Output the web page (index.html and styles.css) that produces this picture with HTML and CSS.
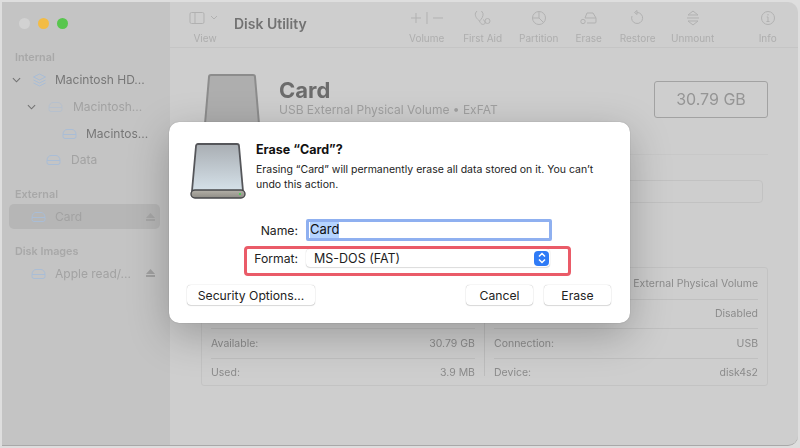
FILE: index.html
```html
<!DOCTYPE html>
<html lang="en">
<head>
<meta charset="utf-8">
<title>Disk Utility</title>
<link rel="stylesheet" href="styles.css">
</head>
<body>
<div class="window">
  <aside class="sidebar">
    <div class="lights"><i class="light l-grey"></i><i class="light l-yellow"></i><i class="light l-green"></i></div>
    <div class="sec sec-first">Internal</div>
    <div class="row r1"><svg class="chev" viewBox="0 0 10 6"><path d="M1 1l4 4 4-4"/></svg>
      <svg class="vol" viewBox="0 0 14 14"><path d="M7 1l6 3-6 3-6-3zM1 7l6 3 6-3M1 10l6 3 6-3"/></svg><span class="dim">Macintosh HD...</span></div>
    <div class="row r2"><svg class="chev" viewBox="0 0 10 6"><path d="M1 1l4 4 4-4"/></svg>
      <svg class="vol faint" viewBox="0 0 15 11"><path d="M1 6c0-3 2-5 4-5h5c2 0 4 2 4 5v2a2 2 0 0 1-2 2H3a2 2 0 0 1-2-2zM1 6h13"/></svg><span class="lighter">Macintosh...</span></div>
    <div class="row r3"><svg class="vol" viewBox="0 0 15 11"><path d="M1 6c0-3 2-5 4-5h5c2 0 4 2 4 5v2a2 2 0 0 1-2 2H3a2 2 0 0 1-2-2zM1 6h13"/></svg><span class="dim">Macintos...</span></div>
    <div class="row r4"><svg class="vol" viewBox="0 0 15 11"><path d="M1 6c0-3 2-5 4-5h5c2 0 4 2 4 5v2a2 2 0 0 1-2 2H3a2 2 0 0 1-2-2zM1 6h13"/></svg><span class="lighter">Data</span></div>
    <div class="sec sec-ext">External</div>
    <div class="row r5 selected"><svg class="vol" viewBox="0 0 15 11"><path d="M1 6c0-3 2-5 4-5h5c2 0 4 2 4 5v2a2 2 0 0 1-2 2H3a2 2 0 0 1-2-2zM1 6h13"/></svg><span class="lighter">Card</span><svg class="eject" viewBox="0 0 9 8"><path d="M4.500 0L9 5H0zM0 6h9v2H0z"/></svg></div>
    <div class="sec sec-img">Disk Images</div>
    <div class="row r6"><svg class="vol" viewBox="0 0 15 11"><path d="M1 6c0-3 2-5 4-5h5c2 0 4 2 4 5v2a2 2 0 0 1-2 2H3a2 2 0 0 1-2-2zM1 6h13"/></svg><span class="lighter">Apple read/...</span><svg class="eject" viewBox="0 0 9 8"><path d="M4.500 0L9 5H0zM0 6h9v2H0z"/></svg></div>
  </aside>
  <main class="main">
    <header class="toolbar">
      <div class="tool view">
        <div class="glyph"><svg width="32" height="14" viewBox="0 0 32 14"><rect x="1" y="1.500" width="14" height="11" rx="1.500"/><path d="M6 1.500v11M22 5l3 3 3-3"/></svg></div>
        <span>View</span>
      </div>
      <div class="app-title">Disk Utility</div>
      <div class="tools">
        <div class="tool t-volume"><div class="glyph"><svg width="36" height="14" viewBox="0 0 36 14"><path d="M7 2v10M2 7h10M18 1v12M24 7h10"/></svg></div><span>Volume</span></div>
        <div class="tool t-aid"><div class="glyph"><svg width="18" height="16" viewBox="0 0 18 16"><path d="M3 1L1.500 3c-1 3 1.500 6 4 8 2-2 4-4.500 3.500-7.500L7.500 1M5.500 11c1 3 3 4 5 3 .8-.8.5-2-.2-3l-.8-1.500"/><circle cx="13.500" cy="11" r="2.500"/></svg></div><span>First Aid</span></div>
        <div class="tool t-part"><div class="glyph"><svg width="16" height="16" viewBox="0 0 16 16"><circle cx="8" cy="8" r="6.500"/><path d="M8 1.500V8l4.500 4.500M8 8H1.500"/></svg></div><span>Partition</span></div>
        <div class="tool t-erase"><div class="glyph"><svg width="18" height="14" viewBox="0 0 18 14"><path d="M5 7l2-5h6l3 5v4a1 1 0 0 1-1 1H7M5 7h11"/><circle cx="3" cy="10.500" r="2.200"/></svg></div><span>Erase</span></div>
        <div class="tool t-restore"><div class="glyph"><svg width="16" height="16" viewBox="0 0 16 16"><path d="M7 2.500a5.500 5.500 0 1 1-5 3.500M7 .5v4L4.500 2.500z"/></svg></div><span>Restore</span></div>
        <div class="tool t-unmount"><div class="glyph"><svg width="14" height="16" viewBox="0 0 14 16"><path d="M2 5l5-4 5 4zM2 11l5 4 5-4zM1 8h12"/></svg></div><span>Unmount</span></div>
        <div class="tool t-info"><div class="glyph"><svg width="16" height="16" viewBox="0 0 16 16"><circle cx="8" cy="8" r="6.500"/><path d="M8 7v4.500M6.500 11.500h3M6.800 7H8"/><circle class="dot" cx="8" cy="4.800" r=".7"/></svg></div><span>Info</span></div>
      </div>
    </header>
    <section class="content">
      <div class="head">
        <svg class="drive-bg" width="56" height="50" viewBox="0 0 56 50"><path d="M5 3a2 2 0 0 1 2-2h42a2 2 0 0 1 2 2l4 47H1z"/></svg>
        <div class="head-text">
          <h1>Card</h1>
          <p>USB External Physical Volume • ExFAT</p>
        </div>
        <div class="capacity">30.79 GB</div>
      </div>
      <div class="usage-line"></div>
      <div class="usage-bar"></div>
      <div class="info-table">
        <div class="col">
          <div class="cell"></div>
          <div class="cell"></div>
          <div class="cell"><span>Available:</span><span>30.79 GB</span></div>
          <div class="cell"><span>Used:</span><span>3.9 MB</span></div>
        </div>
        <div class="col col-right">
          <div class="cell"><span></span><span>External Physical Volume</span></div>
          <div class="cell"><span></span><span>Disabled</span></div>
          <div class="cell"><span>Connection:</span><span>USB</span></div>
          <div class="cell"><span>Device:</span><span>disk4s2</span></div>
        </div>
      </div>
    </section>
  </main>
  <div class="dialog">
    <div class="dlg-top">
      <svg class="dlg-drive" width="56" height="56" viewBox="0 0 56 56">
        <defs>
          <linearGradient id="face" x1="0" y1="0" x2="0" y2="1"><stop offset="0" stop-color="#a9aeb3"/><stop offset="1" stop-color="#d5e1e9"/></linearGradient>
          <linearGradient id="base" x1="0" y1="0" x2="0" y2="1"><stop offset="0" stop-color="#b4b1a8"/><stop offset="1" stop-color="#8f8d86"/></linearGradient>
        </defs>
        <path d="M6 3a2 2 0 0 1 2-2h39a2 2 0 0 1 2 2l4 45H2z" fill="url(#face)" stroke="#55565a" stroke-width="1.800"/>
        <rect x="1" y="47" width="54" height="8" rx="4" fill="url(#base)" stroke="#47484b" stroke-width="1.400"/>
        <circle cx="50" cy="51" r="1.100" fill="#3fd24a"/>
      </svg>
      <div class="dlg-copy">
        <h2>Erase “Card”?</h2>
        <p>Erasing “Card” will permanently erase all data stored on it. You can’t undo this action.</p>
      </div>
    </div>
    <div class="form-row name-row">
      <label class="lab">Name:</label>
      <div class="name-field"><span class="sel-text">Card</span></div>
    </div>
    <div class="form-row format-row">
      <label class="lab">Format:</label>
      <div class="select">
        <span>MS-DOS (FAT)</span>
        <span class="stepper"><svg width="10" height="12" viewBox="0 0 10 12"><path d="M2 4.500l3-3 3 3M2 7.500l3 3 3-3"/></svg></span>
      </div>
      <div class="callout"></div>
    </div>
    <div class="actions">
      <button class="btn sec-btn">Security Options...</button>
      <button class="btn cancel">Cancel</button>
      <button class="btn erase">Erase</button>
    </div>
  </div>
</div>
</body>
</html>
```
FILE: styles.css
```css
* { box-sizing: border-box; }
html, body { margin: 0; height: 100%; }
body {
  width: 800px; height: 448px; overflow: hidden;
  background: #dedede;
  font-family: Inter, "Liberation Sans", sans-serif;
  padding: 2px 2px 2px 2px;
}
.window {
  position: relative; display: flex; width: 796px; height: 444px;
  border-radius: 0 10px 10px 0; overflow: hidden;
  background: #cecece; border-bottom: 1px solid #a9a9a9;
}
.sidebar { width: 168px; flex: none; background: #c4c4c4; padding-top: 16px; font-size: 12px; color: #7d7d7d; filter: blur(.3px); }
.lights { display: flex; gap: 8px; padding-left: 17px; height: 12px; }
.light { width: 11px; height: 11px; border-radius: 50%; }
.l-grey { background: #d2d2d2; } .l-yellow { background: #f3bc45; } .l-green { background: #58c64e; }
.sec { font-size: 10.800px; font-weight: 600; color: #a8a8a8; padding-left: 13px; line-height: 14px; }
.sec-first { margin-top: 21px; }
.sec-ext { margin-top: 15px; }
.sec-img { margin-top: 16px; }
.row { display: flex; align-items: center; height: 27px; position: relative; }
.row svg { fill: none; flex: none; }
.row .chev { width: 9px; height: 6px; stroke: #727272; stroke-width: 1.200; }
.row .vol { width: 15px; height: 14px; stroke: #a9bdd6; stroke-width: 1; margin-right: 10px; }
.row .vol.faint { stroke: #b6c0cd; }
.dim { color: #777; } .lighter { color: #a2a2a2; }
.r1 { padding-left: 10px; margin-top: 1px; } .r1 .chev { margin-right: 11px; } .r1 .vol { margin-right: 8px; }
.r2 { padding-left: 25px; } .r2 .chev { margin-right: 12px; }
.r3 { padding-left: 60px; } .r3 .vol { margin-right: 9px; }
.r4 { padding-left: 44px; margin-top: -1px; }
.r5 .vol, .r6 .vol { margin-right: 9px; }
.r6 { padding-left: 29px; margin-top: 1px; }
.selected { margin: 2px 10px 0 7px; padding-left: 22px; height: 25px; background: #b6b6b6; border-radius: 5px; }
.row .eject { position: absolute; width: 9px; height: 8px; top: 9px; fill: #a6a6a6; }
.r5 .eject { right: 5px; }
.r6 .eject { right: 15px; fill: #a0a0a0; }
.main { flex: 1; min-width: 0; filter: blur(.3px); }
.toolbar { height: 46px; display: flex; align-items: flex-start; border-bottom: 1px solid #c5c5c5; padding-top: 6px; position: relative; }
.tool { display: flex; flex-direction: column; align-items: center; font-size: 10px; color: #aeaeae; }
.tool span { line-height: 14px; }
.glyph { height: 20px; display: flex; align-items: center; margin-bottom: 3px; }
.glyph svg { fill: none; stroke: #b1b1b1; stroke-width: 1; }
.glyph .dot { fill: #b1b1b1; stroke: none; }
.view { margin-left: 19px; width: 32px; }
.app-title { margin-left: 13px; margin-top: 7px; font-size: 14px; font-weight: 600; color: #727272; }
.tools { display: flex; flex: 1; margin-left: 101px; }
.t-volume { width: 38px; }
.t-aid { width: 40px; margin-left: 17px; }
.t-part { width: 42px; margin-left: 15px; }
.t-erase { width: 30px; margin-left: 14px; }
.t-restore { width: 38px; margin-left: 15px; }
.t-unmount { width: 46px; margin-left: 13px; }
.t-info { width: 24px; margin-left: 40px; }
.content { padding: 0 30px 0 31px; position: relative; }
.head { display: flex; align-items: flex-start; height: 106px; position: relative; }
.drive-bg { flex: none; margin-left: 3px; margin-top: 26px; fill: #aeaeae; stroke: #8c8c8c; stroke-width: 2; }
.head-text { margin-left: 19px; margin-top: 29px; }
h1 { margin: 0; font-size: 22px; line-height: 26px; font-weight: 700; color: #6c6c6c; }
p { margin: 0; }
.head-text p { font-size: 12px; line-height: 14px; color: #a0a0a0; }
.capacity { margin-left: auto; margin-top: 33px; width: 114px; height: 37px; border: 1px solid #a2a2a2; border-radius: 3px; font-size: 16px; line-height: 35px; text-align: center; color: #959595; }
.usage-line { height: 1px; background: #c8c8c8; }
.usage-bar { height: 23px; margin-top: 25px; margin-right: 5px; border: 1px solid #c2c2c2; border-radius: 4px; }
.info-table { display: flex; margin-top: 64px; height: 119px; border: 1px solid #c3c3c3; border-radius: 3px; padding-top: 1px; }
.col { flex: 1; padding: 0 9px; }
.col-right { border-left: 1px solid #bdbdbd; align-self: flex-start; height: 107px; }
.cell { display: flex; justify-content: space-between; align-items: center; height: 29.500px; font-size: 10.500px; color: #8b8b8b; border-top: 1px solid #c0c0c0; }
.cell:first-child { border-top: 0; }
.dialog { position: absolute; left: 167px; top: 120px; width: 461px; height: 201px; background: #fff; border-radius: 10px; box-shadow: 0 0 1px rgba(0,0,0,.35), 0 12px 40px rgba(0,0,0,.25); padding: 21px 19px 0 18px; color: #1d1d1d; }
.dlg-top { display: flex; align-items: flex-start; padding-left: 3px; height: 76px; }
.dlg-drive { flex: none; }
.dlg-copy { margin-left: 10px; }
h2 { margin: 0 0 5px; font-size: 12.500px; line-height: 14px; font-weight: 700; color: #111; }
.dlg-copy p { font-size: 10.500px; line-height: 15px; color: #222; width: 350px; }
.form-row { display: flex; align-items: center; position: relative; font-size: 12.200px; }
.lab { width: 111px; text-align: right; margin-right: 8px; color: #222; flex: none; }
.name-row { height: 22px; }
.name-field { width: 246px; height: 22px; border: 3px solid #8fb0f0; border-radius: 2px; padding-left: 1px; font-size: 13px; line-height: 15px; }
.sel-text { background: #b5d4ff; color: #111; display: inline-block; height: 16px; }
.format-row { height: 18px; margin-top: 8px; }
.select { width: 244px; height: 18px; border-radius: 4px; box-shadow: 0 0 1px rgba(0,0,0,.25), 0 1px 1px rgba(0,0,0,.12); display: flex; justify-content: space-between; align-items: center; padding: 0 1px 0 8px; font-size: 12.500px; }
.stepper { width: 15px; height: 15px; border-radius: 4px; background: #2f7bf6; display: flex; align-items: center; justify-content: center; }
.stepper svg { fill: none; stroke: #fff; stroke-width: 1.500; }
.callout { position: absolute; left: 57px; top: -3px; width: 327px; height: 30px; border: 3px solid #ea5b68; border-radius: 4px; pointer-events: none; }
.actions { display: flex; margin-top: 18px; }
.btn { font: inherit; font-size: 12.200px; color: #222; height: 20px; padding: 0; border: 0; border-radius: 4px; background: #fff; box-shadow: 0 0 1px rgba(0,0,0,.35), 0 1px 1px rgba(0,0,0,.12); }
.sec-btn { width: 128px; }
.cancel { width: 67px; margin-left: auto; }
.erase { width: 67px; margin-left: 11px; }
```
